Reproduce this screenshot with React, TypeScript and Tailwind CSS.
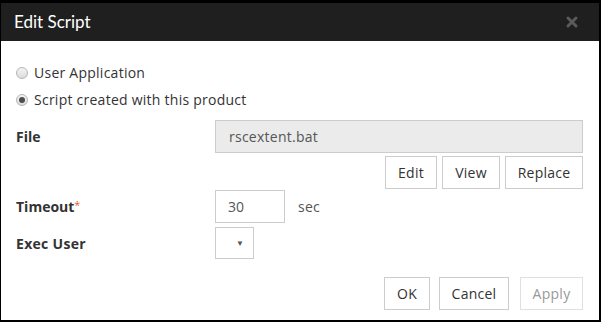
import { X } from 'lucide-react';

function Radio({ checked, label }: { checked?: boolean; label: string }) {
  return (
    <div className="flex items-center h-[27px]">
      <span className="w-[12px] h-[12px] rounded-full border border-[#b5b5b5] bg-gradient-to-b from-[#f4f4f4] to-[#dcdcdc] flex items-center justify-center">
        {checked && <span className="w-[6px] h-[6px] rounded-full bg-[#4d4d4d]" />}
      </span>
      <span className="ml-[6px] text-[14px] tracking-[0.25px] text-[#333]">{label}</span>
    </div>
  );
}

export default function App() {
  return (
    <div
      className="w-[601px] h-[322px] bg-black pt-[3px] pl-[1px] pr-[2px] pb-[2px] flex flex-col"
      style={{ fontFamily: '"Open Sans", "Noto Sans", sans-serif' }}
    >
      <div className="h-[38px] bg-[#1f1f1f] flex items-center justify-between pl-[13px] pr-[19px]">
        <span className="text-[17px] text-white" style={{ fontFamily: 'Lato, sans-serif' }}>
          Edit Script
        </span>
        <X className="w-[16px] h-[16px] text-[#5a5a5a]" strokeWidth={4.5} />
      </div>

      <div className="flex-1 bg-white pl-[15px] pr-[16px] pt-[18px] flex flex-col">
        <Radio label="User Application" />
        <Radio checked label="Script created with this product" />

        <div className="flex items-center mt-[7px]">
          <span className="w-[199px] text-[14px] font-bold text-[#333]">File</span>
          <div className="flex-1 h-[33px] bg-[#ebebeb] border border-[#ccc] flex items-center px-[13px] text-[14px] tracking-[0.25px] text-[#555]">
            rscextent.bat
          </div>
        </div>

        <div className="flex justify-end gap-[5px] mt-[3px]">
          <button className="w-[52px] h-[33px] border border-[#ccc] bg-white text-[14px] tracking-[0.25px] text-[#333]">Edit</button>
          <button className="w-[58px] h-[33px] border border-[#ccc] bg-white text-[14px] tracking-[0.25px] text-[#333]">View</button>
          <button className="w-[78px] h-[33px] border border-[#ccc] bg-white text-[14px] tracking-[0.25px] text-[#333]">Replace</button>
        </div>

        <div className="flex items-center mt-[1px]">
          <span className="w-[199px] text-[14px] font-bold text-[#333]">
            Timeout<sup className="text-[#e8602c] font-normal text-[11px] relative top-[-3px]">*</sup>
          </span>
          <div className="w-[70px] h-[33px] border border-[#ccc] flex items-center px-[12px] text-[14px] text-[#555]">30</div>
          <span className="ml-[13px] text-[14px] tracking-[0.25px] text-[#555]">sec</span>
        </div>

        <div className="flex items-center mt-[4px]">
          <span className="w-[199px] text-[14px] font-bold text-[#333] tracking-[0.3px]">Exec User</span>
          <div className="w-[39px] h-[32px] border border-[#ccc] flex items-center justify-end pr-[9px]">
            <span className="text-[8px] text-[#555]">▼</span>
          </div>
        </div>

        <div className="flex justify-end mt-[18px]">
          <button className="w-[46px] h-[33px] border border-[#ccc] bg-white text-[14px] tracking-[0.25px] text-[#333]">OK</button>
          <button className="ml-[9px] w-[70px] h-[33px] border border-[#ccc] bg-white text-[14px] tracking-[0.25px] text-[#333]">Cancel</button>
          <button className="ml-[11px] w-[63px] h-[33px] border border-[#e0e0e0] bg-white text-[14px] tracking-[0.25px] text-[#999]">Apply</button>
        </div>
      </div>
    </div>
  );
}
